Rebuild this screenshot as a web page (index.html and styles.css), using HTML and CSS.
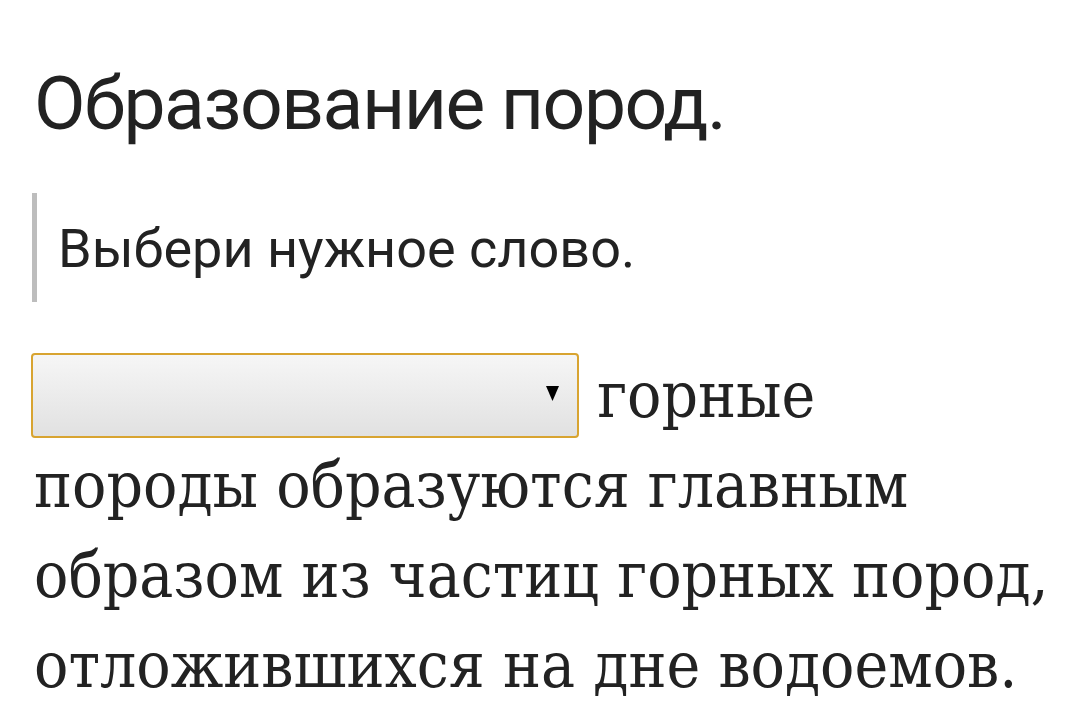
FILE: index.html
```html
<!DOCTYPE html>
<html lang="ru">
<head>
<meta charset="utf-8">
<link rel="stylesheet" href="styles.css">
</head>
<body>
<main class="page">
  <h1 class="title">Образование пород.</h1>
  <blockquote class="hint">Выбери нужное слово.</blockquote>
  <p class="task"><span class="select"><svg class="arrow" width="13" height="15" viewBox="0 0 13 15"><polygon points="0,0 13,0 6.5,15" fill="#000"/></svg></span> горные породы образуются главным образом из частиц горных пород, отложившихся на дне водоемов.</p>
</main>
</body>
</html>
```
FILE: styles.css
```css
html, body { margin: 0; padding: 0; background: #fff; }
.page { padding: 0 29px 0 34px; }
.title {
  font-family: Roboto, sans-serif;
  font-weight: 400;
  font-size: 75px;
  letter-spacing: -1.5px;
  line-height: 90px;
  color: #222;
  margin: 58px 0 0 0;
}
.hint {
  margin: 45px 0 0 -2px;
  border-left: 5px solid #bdbdbd;
  padding: 24px 0 21px 21px;
  font-family: Roboto, sans-serif;
  font-size: 54px;
  line-height: 64px;
  color: #222;
}
.task {
  margin: 48px 0 0 0;
  font-family: "DejaVu Serif", serif;
  font-stretch: condensed;
  font-size: 63.5px;
  line-height: 90px;
  color: #222;
}
.select {
  display: inline-block;
  vertical-align: -21px;
  box-sizing: border-box;
  width: 548px;
  height: 85px;
  margin-left: -3px;
  border: 2px solid #d8a431;
  border-radius: 4px;
  background: linear-gradient(#f6f6f6, #e1e1e1);
  position: relative;
}
.arrow {
  position: absolute;
  right: 18px;
  top: 31px;
}
```
